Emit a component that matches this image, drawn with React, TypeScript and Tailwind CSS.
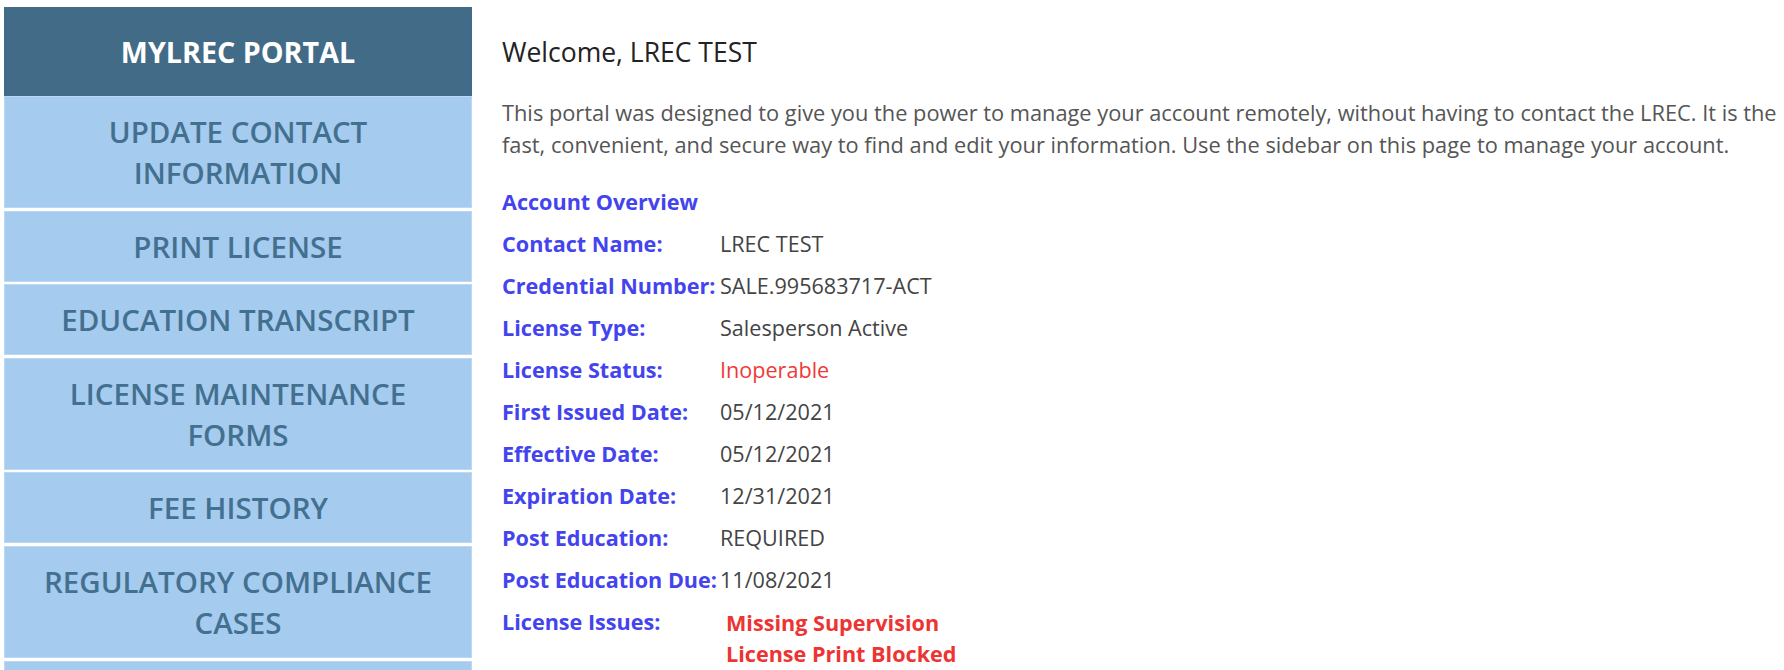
import React from "react";

const menu = [
  ["UPDATE CONTACT", "INFORMATION"],
  ["PRINT LICENSE"],
  ["EDUCATION TRANSCRIPT"],
  ["LICENSE MAINTENANCE", "FORMS"],
  ["FEE HISTORY"],
  ["REGULATORY COMPLIANCE", "CASES"],
];

const rows: [string, string, string?][] = [
  ["Contact Name:", "LREC TEST"],
  ["Credential Number:", "SALE.995683717-ACT"],
  ["License Type:", "Salesperson Active"],
  ["License Status:", "Inoperable", "red"],
  ["First Issued Date:", "05/12/2021"],
  ["Effective Date:", "05/12/2021"],
  ["Expiration Date:", "12/31/2021"],
  ["Post Education:", "REQUIRED"],
  ["Post Education Due:", "11/08/2021"],
];

export default function App() {
  return (
    <div
      className="flex w-[1784px] h-[670px] overflow-hidden bg-white pl-[4px] pt-[7px]"
      style={{ fontFamily: "'Open Sans', 'Liberation Sans', sans-serif" }}
    >
      <aside className="w-[468px] shrink-0 flex flex-col">
        <div className="h-[89px] shrink-0 bg-[#426b87] flex items-center justify-center text-white font-bold text-[28.7px]">
          MYLREC PORTAL
        </div>
        <div className="flex flex-col gap-[2.6px] shrink-0">
          {menu.map((lines, i) => (
            <div
              key={i}
              className="shrink-0 bg-[#a5cbef] border border-[#bcd8f4] py-[14px] text-center text-[#44708f] font-semibold text-[29.5px] leading-[41px] whitespace-nowrap"
            >
              {lines.map((l, j) => (
                <div key={j}>{l}</div>
              ))}
            </div>
          ))}
          <div className="shrink-0 h-[71px] bg-[#a5cbef] border border-[#bcd8f4]" />
        </div>
      </aside>
      <main className="ml-[30px] flex-1 pt-[26px]">
        <h1 className="text-[26.5px] leading-[38px] text-[#222]">Welcome, LREC TEST</h1>
        <p className="mt-[26px] w-[1285px] text-[21.8px] leading-[31.5px] text-[#555]">
          This portal was designed to give you the power to manage your account remotely, without having to contact the
          LREC. It is the fast, convenient, and secure way to find and edit your information. Use the sidebar on this page
          to manage your account.
        </p>
        <div className="mt-[21px] text-[21.6px] leading-[42px]">
          <div className="font-bold text-[#4444ee]">Account Overview</div>
          {rows.map(([k, v, c]) => (
            <div key={k} className="grid grid-cols-[218px_1fr]">
              <div className="font-bold text-[#4444ee] whitespace-nowrap">{k}</div>
              <div className={c === "red" ? "text-[#ee3a3a]" : "text-[#444]"}>{v}</div>
            </div>
          ))}
          <div className="grid grid-cols-[218px_1fr]">
            <div className="font-bold text-[#4444ee]">License Issues:</div>
            <div className="pl-[6px] pt-[5.5px] font-bold text-[#ee3333] leading-[31px]">
              <div>Missing Supervision</div>
              <div>License Print Blocked</div>
            </div>
          </div>
        </div>
      </main>
    </div>
  );
}
